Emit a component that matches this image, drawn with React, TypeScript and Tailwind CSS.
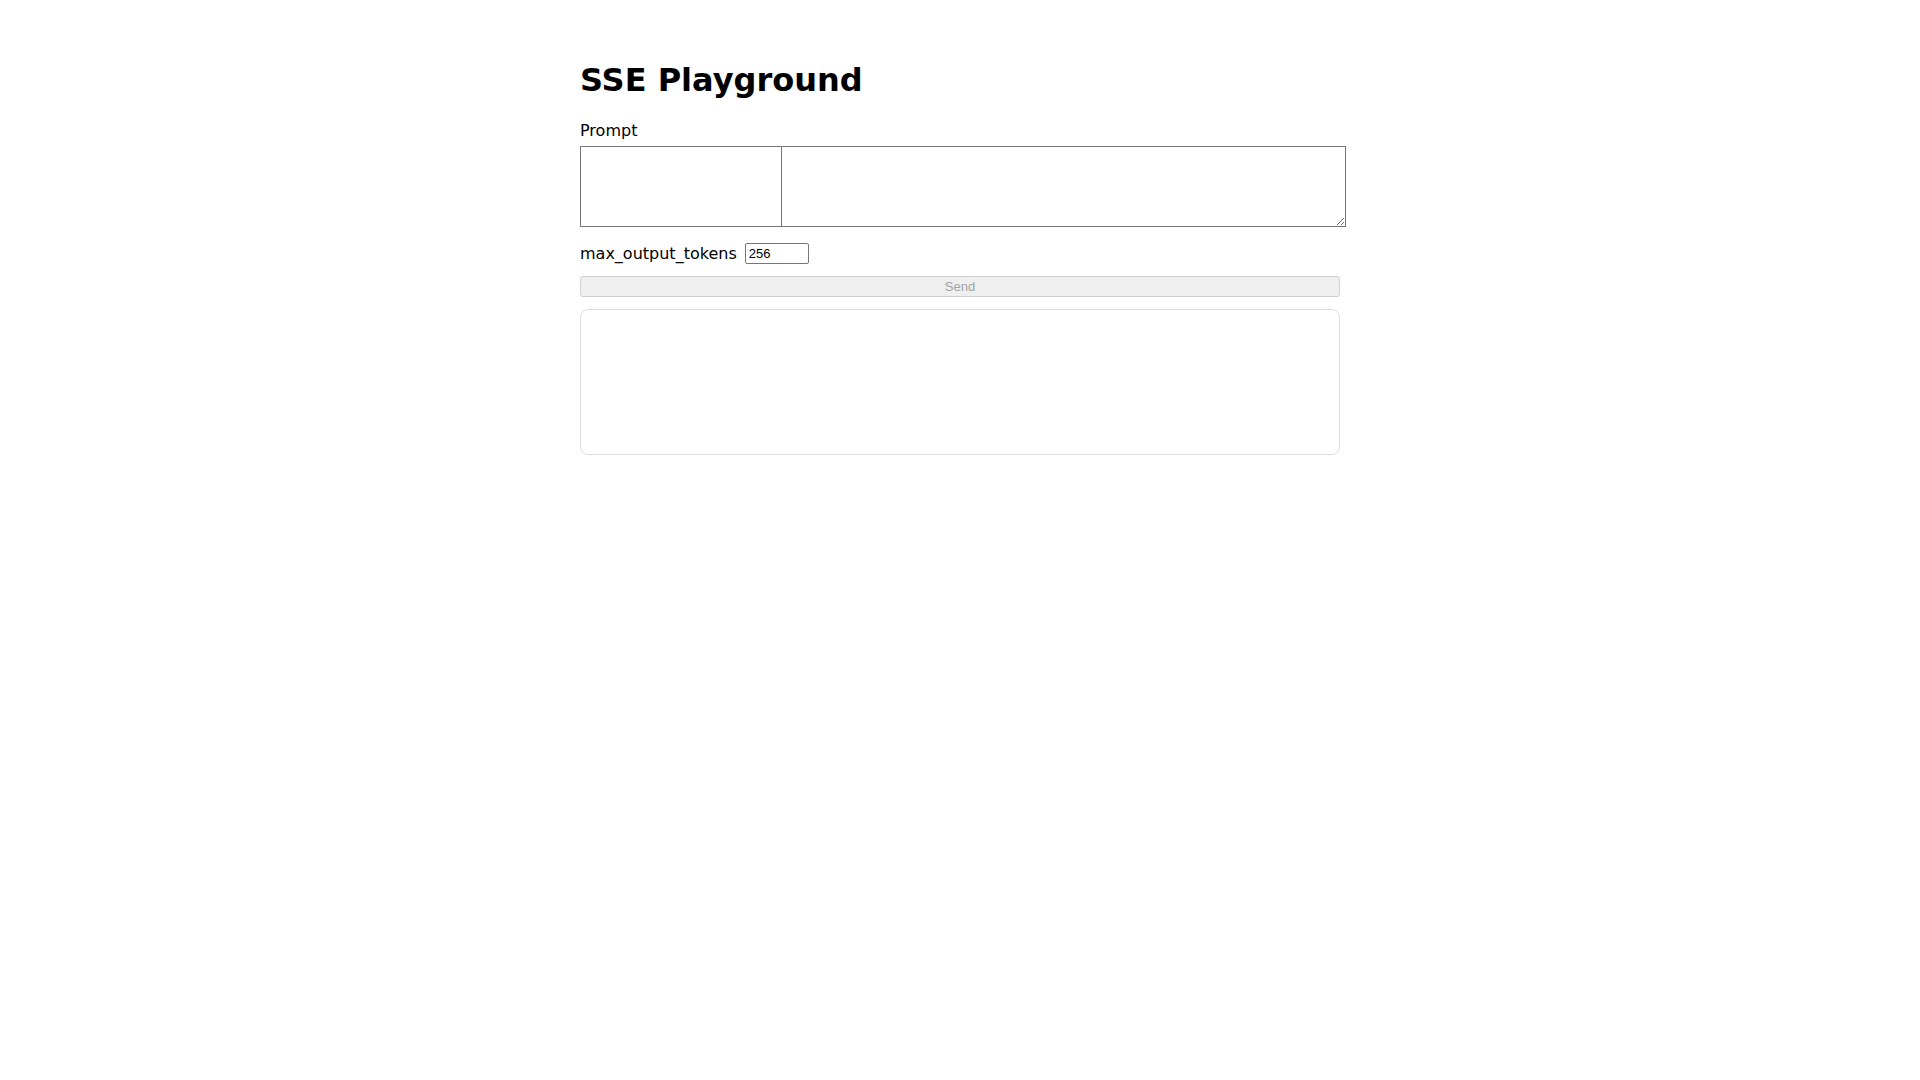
export default function App() {
    return (
        <div className="min-h-screen w-full bg-white text-black" style={{ fontFamily: '"DejaVu Sans", sans-serif' }}>
            <main className="mx-auto max-w-[800px] px-5 pt-[62px]">
                <h1 className="text-[32px] font-bold leading-[37px]">SSE Playground</h1>

                {/* Prompt */}
                <label htmlFor="prompt" className="mt-[22px] block text-base leading-[19px]">
                    Prompt
                </label>
                <div className="relative mt-[6px] h-[81px] w-[766px]">
                    <textarea
                        id="prompt"
                        className="block h-[81px] w-[766px] resize-y border border-[#767676] bg-white p-[2px] text-[13px] outline-none"
                    />
                    <div className="pointer-events-none absolute top-0 left-[201px] h-[81px] w-px bg-[#767676]" />
                </div>

                {/* Tokens */}
                <div className="mt-[15px] flex h-[22px] items-center gap-2">
                    <span className="text-base leading-[19px]">max_output_tokens</span>
                    <input
                        type="number"
                        defaultValue={256}
                        className="h-[21px] w-[64px] rounded-[2px] border border-[#767676] px-[3px] text-[13px] text-black outline-none"
                        style={{ fontFamily: '"Liberation Sans", Arial, sans-serif' }}
                    />
                </div>

                <button
                    disabled
                    className="mt-[12px] block h-[21px] w-full rounded-[3px] border border-[#cfcfcf] bg-[#efefef] text-[13px] leading-[19px] text-[#a3a3a3]"
                    style={{ fontFamily: '"Liberation Sans", Arial, sans-serif' }}
                >
                    Send
                </button>

                {/* Output */}
                <div className="mt-[12px] h-[146px] w-full rounded-lg border border-[#dddddd] bg-white" />
            </main>
        </div>
    );
}
